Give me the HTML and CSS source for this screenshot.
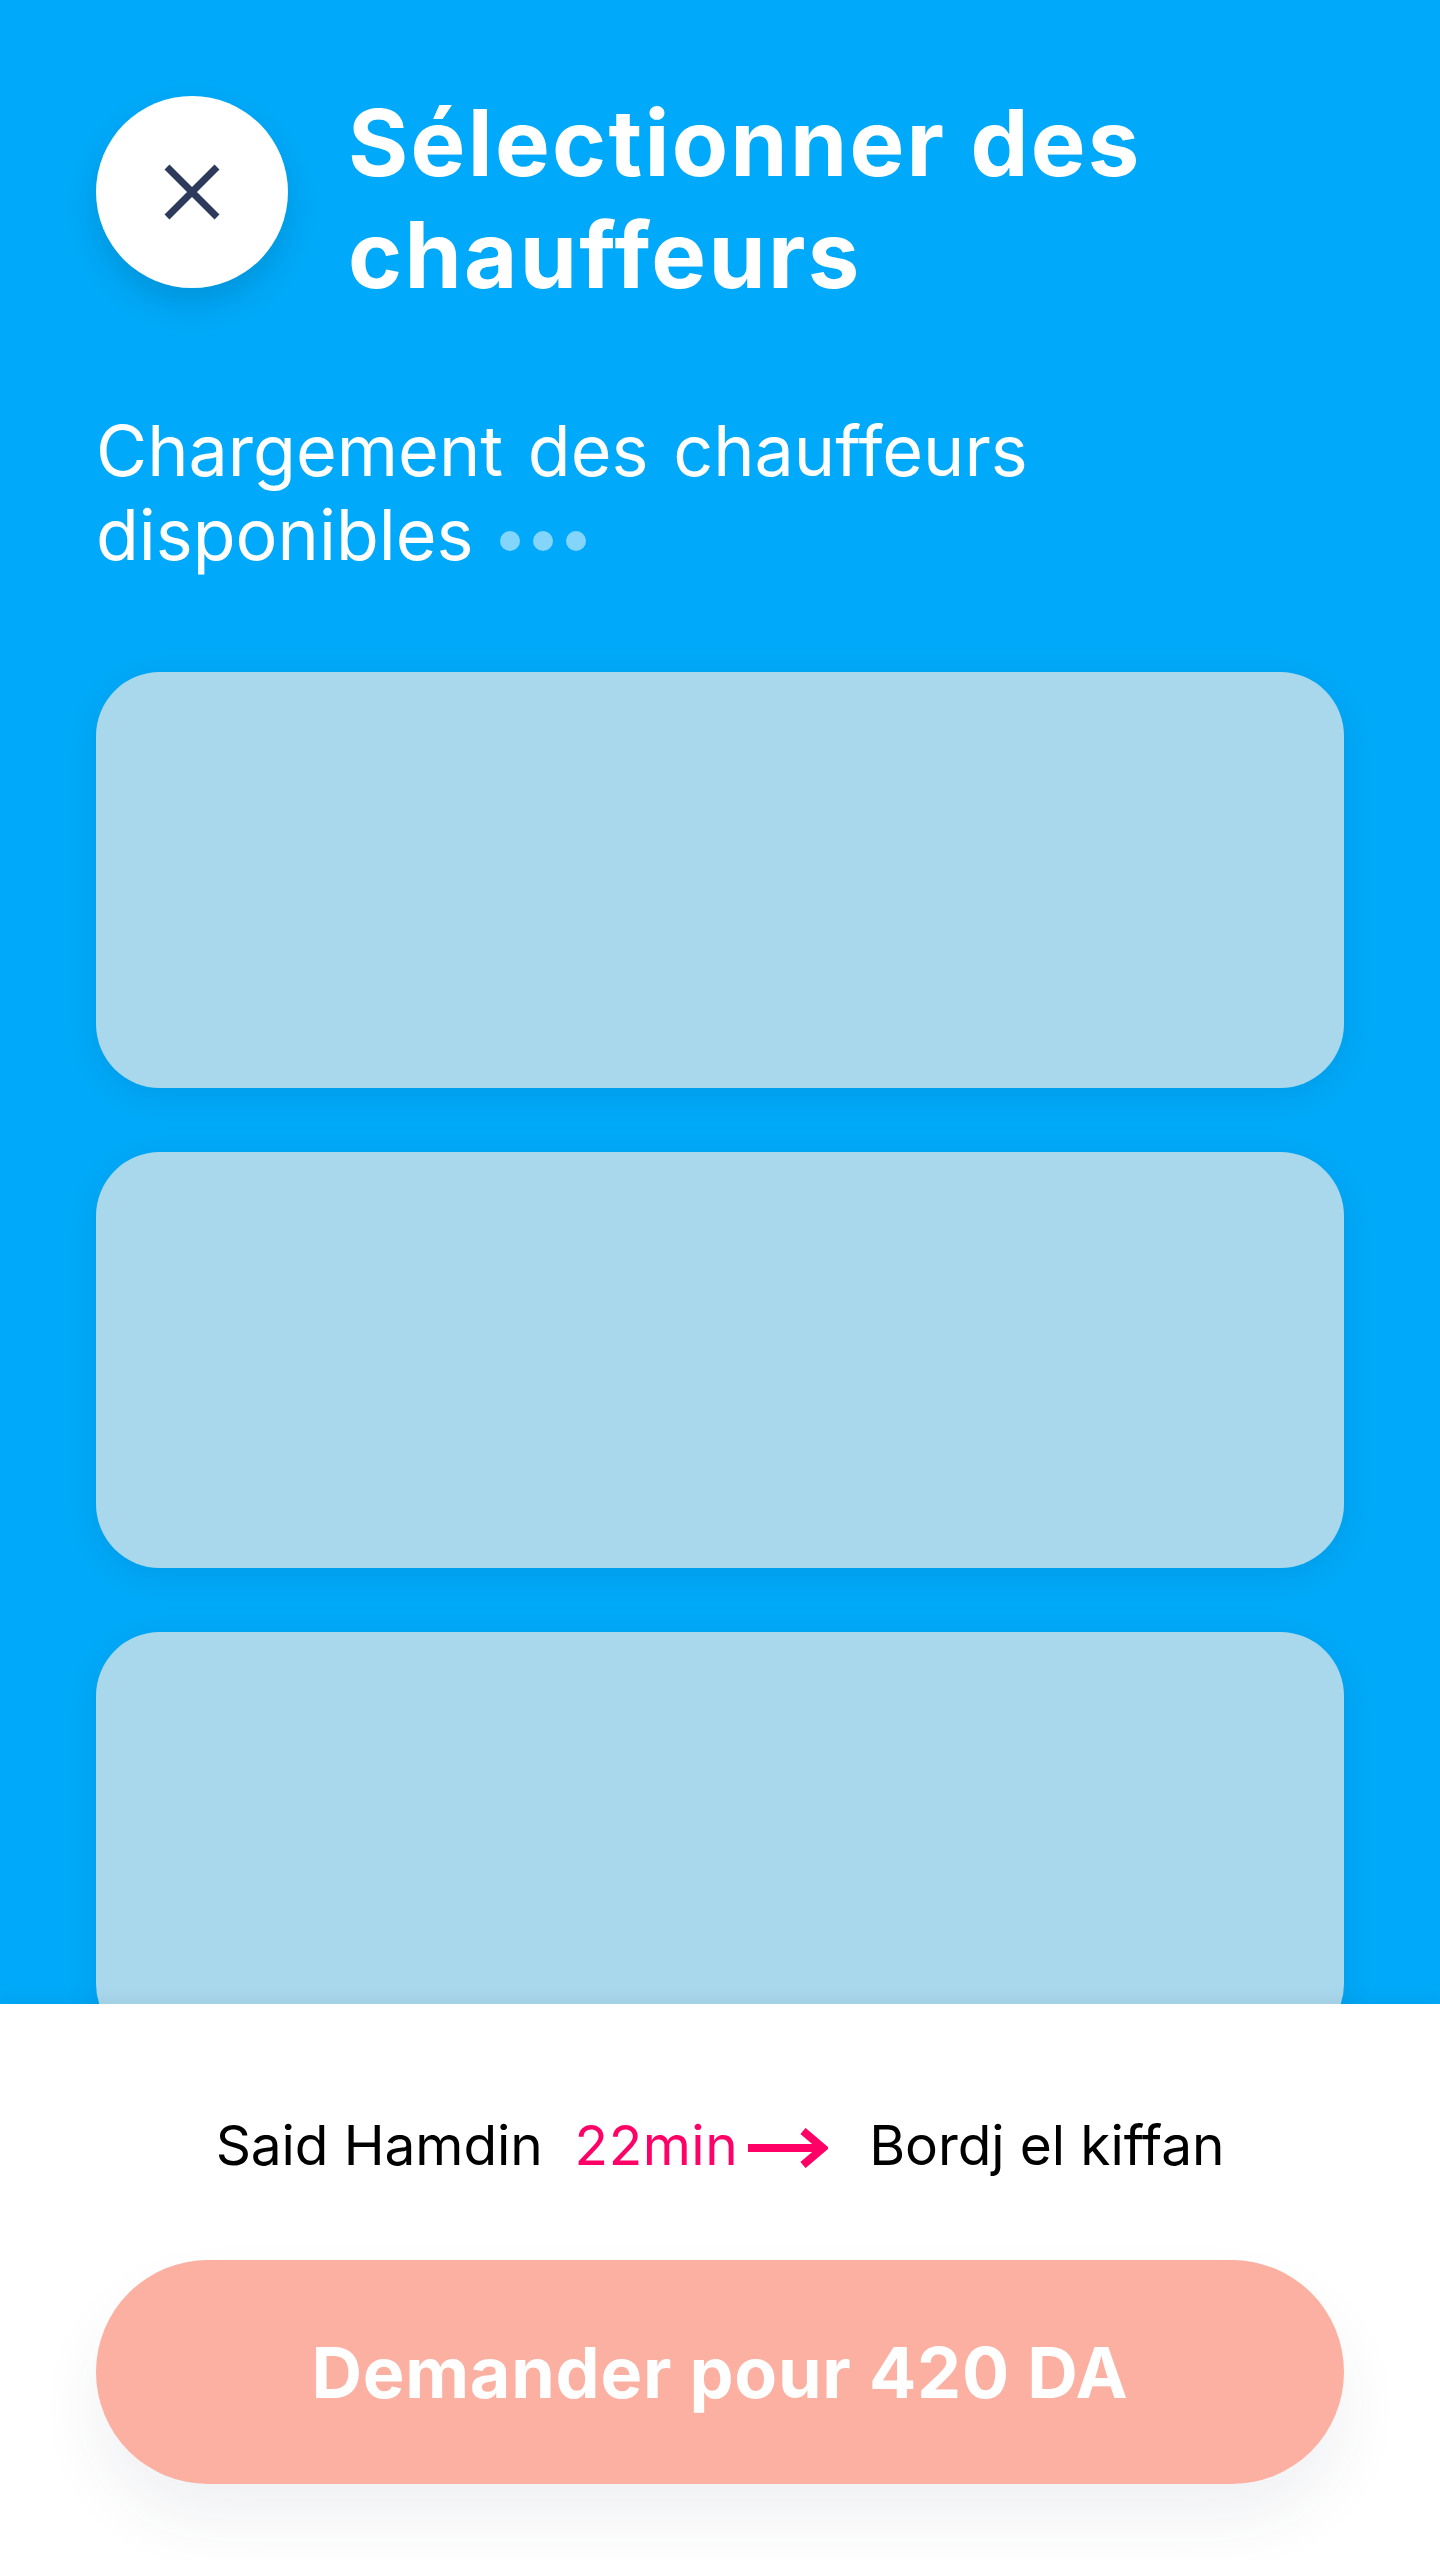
FILE: index.html
```html
<!DOCTYPE html>
<html lang="fr">
<head>
<meta charset="utf-8">
<title>Sélectionner des chauffeurs</title>
<link rel="stylesheet" href="styles.css">
</head>
<body>
<div class="screen">
  <main class="main">
    <header class="header">
      <button class="close" aria-label="Fermer">
        <svg class="close-icon" viewBox="0 0 56 56" width="56" height="56"><path d="M3 3L53 53M53 3L3 53"/></svg>
      </button>
      <h1 class="title">Sélectionner des chauffeurs</h1>
    </header>
    <p class="status">Chargement des chauffeurs disponibles<span class="dots"><i></i><i></i><i></i></span></p>
    <div class="cards">
      <div class="card"></div>
      <div class="card"></div>
      <div class="card"></div>
    </div>
  </main>
  <footer class="footer">
    <div class="route">
      <span class="name">Said Hamdin</span>
      <span class="time">22min</span>
      <svg class="arrow" viewBox="0 0 80 40" width="80" height="40"><path class="shaft" d="M0 20H76"/><path class="head" d="M55 3L75 20L55 37"/></svg>
      <span class="place">Bordj el kiffan</span>
    </div>
    <button class="cta">Demander pour 420 DA</button>
  </footer>
</div>
</body>
</html>
```
FILE: styles.css
```css
* { box-sizing: border-box; }
html, body { margin: 0; padding: 0; }
body { font-family: Inter, "Noto Sans", sans-serif; background: #fff; }
.screen { width: 1440px; height: 2560px; display: flex; flex-direction: column; overflow: hidden; }
.main { height: 2004px; flex: none; background: #00a9f9; padding: 96px 96px 0; overflow: hidden; }
.header { display: flex; align-items: flex-start; gap: 60px; }
.close { width: 192px; height: 192px; flex: none; border: 0; border-radius: 50%; background: #fff; padding: 0; display: flex; align-items: center; justify-content: center; box-shadow: 0 16px 32px rgba(0,0,0,.12); }
.close-icon path { fill: none; stroke: #2d3a5c; stroke-width: 7; }
.title { margin: -9px 0 0; font-size: 92px; line-height: 112px; font-weight: 700; color: #fff; letter-spacing: 2.3px; }
.status { margin: 98px 0 0; width: 1000px; font-size: 70px; line-height: 84px; font-weight: 370; letter-spacing: 0; word-spacing: 5px; color: #fff; }
.dots { display: inline-flex; gap: 13px; margin-left: 27px; vertical-align: middle; }
.dots i { display: block; width: 20px; height: 20px; border-radius: 50%; background: #84d5fb; }
.cards { margin-top: 95px; display: flex; flex-direction: column; gap: 64px; }
.card { height: 416px; flex: none; border-radius: 64px; background: #a9d7ec; box-shadow: 0 8px 32px rgba(0,0,0,.08); }
.footer { position: relative; flex: 1; background: #fff; padding: 0 96px; box-shadow: 0 -4px 16px rgba(0,0,0,.05); }
.route { height: 256px; display: flex; align-items: center; justify-content: center; padding-top: 26px; font-size: 55px; font-weight: 400; letter-spacing: -.1px; color: #000; }
.time { margin-left: 32px; color: #ff0066; font-weight: 370; letter-spacing: .5px; }
.arrow { margin: 6px 41px 0 10px; flex: none; }
.shaft, .head { fill: none; stroke: #ff0066; stroke-width: 8; }
.cta { display: block; width: 100%; height: 224px; border: 0; border-radius: 112px; background: #fcb0a1; color: #fff; font-family: inherit; font-size: 70px; font-weight: 700; letter-spacing: .75px; box-shadow: 0 36px 64px rgba(45,58,92,.07); }
```
